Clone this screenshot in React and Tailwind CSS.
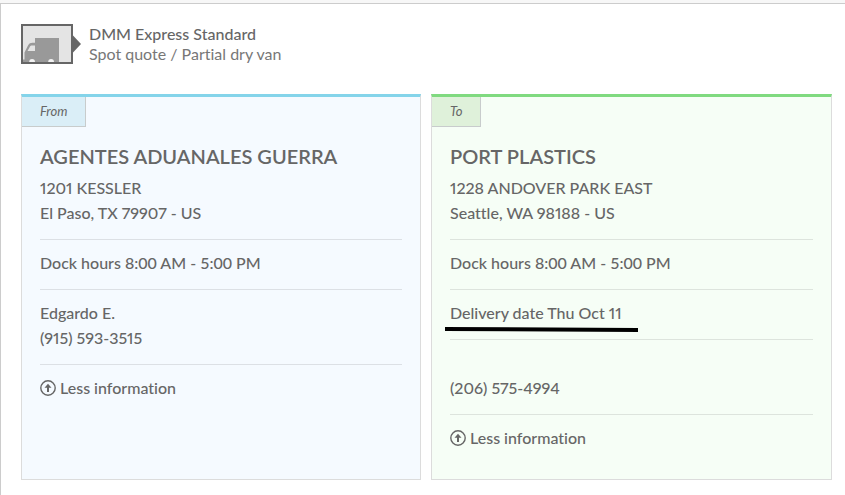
function TruckBadge() {
  return (
    <svg className="h-10 w-15 shrink-0" viewBox="0 0 60 40" aria-hidden="true">
      <rect x="1" y="1" width="50" height="38" fill="#e4e4e4" stroke="#666" strokeWidth="2" />
      <path d="M52 11.500 L60 20 L52 28.500 Z" fill="#666" />
      <path
        d="M14 14 H38 V38 H2 V35.500 H3.500 V28.500 L7 21.500 C8 19.500 9.500 18.800 11.500 18.800 H14 Z"
        fill="#999"
      />
      <path d="M6.500 27 L9 22.500 C9.500 21.700 10 21.400 11 21.400 H14 V27 Z" fill="#e4e4e4" />
      <path
        d="M8.200 38 a2.900 2.900 0 0 1 5.800 0 Z M27.200 38 a2.900 2.900 0 0 1 5.800 0 Z"
        fill="#f2f2f2"
      />
    </svg>
  );
}

function CircleUpIcon() {
  return (
    <svg className="h-4 w-4 shrink-0" viewBox="0 0 16 16" aria-hidden="true">
      <circle cx="8" cy="8" r="7.200" fill="none" stroke="#666" strokeWidth="1.400" />
      <path d="M8 3.800 L11.500 7.800 H9 V12 H7 V7.800 H4.500 Z" fill="#666" />
    </svg>
  );
}

function Section({ children }) {
  return <div className="border-b border-black/10 pt-[10px] pb-[14px]">{children}</div>;
}

function StopCard({ label, name, className, tabClassName, children }) {
  return (
    <section className={`border border-t-3 border-[#dcdcdc] pb-[29px] ${className}`}>
      <div className="flex">
        <span
          className={`h-[30px] border-r border-b border-[#c8cccc] px-[18px] text-[13px] leading-7 font-normal italic ${tabClassName}`}
        >
          {label}
        </span>
      </div>
      <div className="px-[18px] pt-[17px]">
        <h2 className="mb-[6px] text-xl leading-[25px] font-semibold">{name}</h2>
        {children}
        <button type="button" className="mt-[10px] flex items-center gap-1">
          <CircleUpIcon />
          Less information
        </button>
      </div>
    </section>
  );
}

export default function App() {
  return (
    <div className="min-h-screen border-t-3 border-[#f7f7f7] bg-white font-['Lato',sans-serif] text-base leading-[25px] font-medium text-[#666] proportional-nums [font-variant-ligatures:none]">
      <main className="min-h-[calc(100vh-3px)] border-t border-l border-[#ccc] pt-5 pr-[13px] pb-[14px] pl-5">
        <header className="flex gap-2">
          <TruckBadge />
          <div className="leading-5">
            <h1>DMM Express Standard</h1>
            <p className="font-normal text-[#777]">Spot quote / Partial dry van</p>
          </div>
        </header>

        <div className="mt-[30px] grid grid-cols-[400fr_401fr] gap-[10px]">
          <StopCard
            label="From"
            name="AGENTES ADUANALES GUERRA"
            className="border-t-[#84d4ea] bg-[#f5faff]"
            tabClassName="bg-[#daeef7]"
          >
            <div className="border-b border-black/10 pb-[14px]">
              <p>1201 KESSLER</p>
              <p>El Paso, TX 79907 - US</p>
            </div>
            <Section>
              <p className="tabular-nums">Dock hours 8:00 AM - 5:00 PM</p>
            </Section>
            <Section>
              <p>Edgardo E.</p>
              <p>(915) 593-3515</p>
            </Section>
          </StopCard>

          <StopCard
            label="To"
            name="PORT PLASTICS"
            className="border-t-[#80da80] bg-[#f6fef6]"
            tabClassName="bg-[#dff1da]"
          >
            <div className="border-b border-black/10 pb-[14px]">
              <p>1228 ANDOVER PARK EAST</p>
              <p>Seattle, WA 98188 - US</p>
            </div>
            <Section>
              <p className="tabular-nums">Dock hours 8:00 AM - 5:00 PM</p>
            </Section>
            <Section>
              <span className="relative inline-block">
                Delivery date Thu Oct 11
                {/* marker stroke over the delivery date */}
                <svg
                  className="absolute top-[27px] -left-[5px] h-[5px] w-[193px]"
                  viewBox="0 0 193 5"
                  aria-hidden="true"
                >
                  <path d="M0 0 L193 1 V5 L0 4 Z" fill="#000" />
                </svg>
              </span>
            </Section>
            <Section>
              <p className="h-[25px]"></p>
              <p>(206) 575-4994</p>
            </Section>
          </StopCard>
        </div>
      </main>
    </div>
  );
}
